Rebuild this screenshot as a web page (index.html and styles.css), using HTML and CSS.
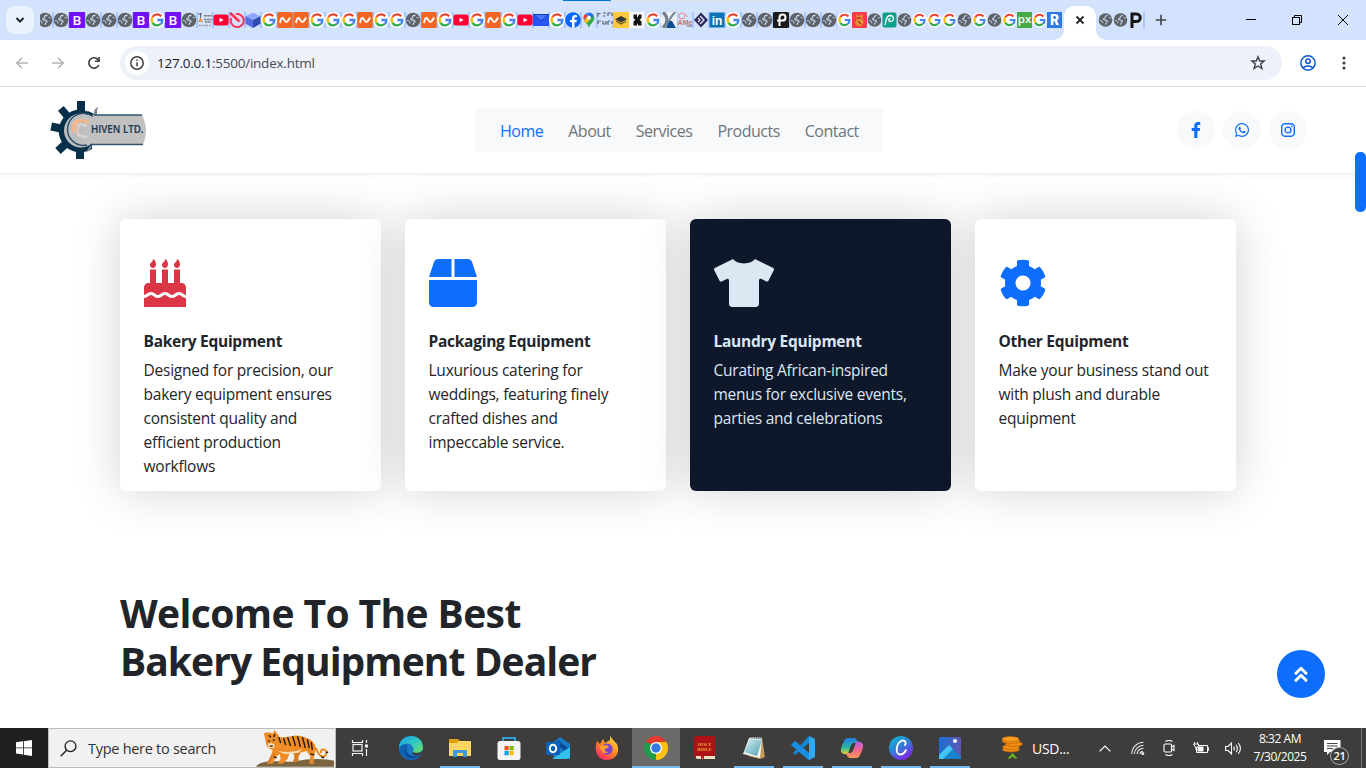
FILE: index.html
```html
<!DOCTYPE html>
<html lang="en">
<head>
<meta charset="utf-8">
<title>Chiven Ltd.</title>
<link rel="stylesheet" href="styles.css">
</head>
<body>
<svg class="defs" width="0" height="0">
  <defs>
    <linearGradient id="edgeA" x1="0" y1="0" x2="1" y2="1"><stop offset="0" stop-color="#1b9de2"/><stop offset=".5" stop-color="#2fc7c5"/><stop offset="1" stop-color="#6fe05a"/></linearGradient>
    <linearGradient id="fireA" x1=".9" y1="0" x2=".2" y2="1"><stop offset="0" stop-color="#ffe14a"/><stop offset=".5" stop-color="#ff8a20"/><stop offset="1" stop-color="#f5236b"/></linearGradient>
    <linearGradient id="copA" x1="0" y1="0" x2="0" y2="1"><stop offset="0" stop-color="#1f7be8"/><stop offset=".6" stop-color="#2bb9a0"/><stop offset="1" stop-color="#f3d12c"/></linearGradient>
    <linearGradient id="copB" x1="0" y1="0" x2="0" y2="1"><stop offset="0" stop-color="#b061e8"/><stop offset=".5" stop-color="#f0648c"/><stop offset="1" stop-color="#ff9a55"/></linearGradient>
    <linearGradient id="canA" x1="0" y1="0" x2=".6" y2="1"><stop offset="0" stop-color="#06c3cc"/><stop offset=".5" stop-color="#2d83dc"/><stop offset="1" stop-color="#7d2ae8"/></linearGradient>
    <linearGradient id="phoA" x1="0" y1="0" x2="1" y2="0"><stop offset="0" stop-color="#1a6fd0"/><stop offset="1" stop-color="#5c58b4"/></linearGradient>
    <linearGradient id="noteA" x1="0" y1="0" x2="1" y2="1"><stop offset="0" stop-color="#d8f1f6"/><stop offset="1" stop-color="#4c9db0"/></linearGradient>
  </defs>
  <symbol id="globe" viewBox="0 0 16 16"><circle cx="8" cy="8" r="7.300" fill="#5f6368"/><path d="M10.500 3.200Q7.500 3.500 7.700 5.200 7.900 6.200 6 6.500 5.500 8 8 8.200 10.500 8.500 9.800 10 8 11 8 13" fill="none" stroke="#cbdaf3" stroke-width="1.200"/><path d="M1.800 8.300 4.500 9.200 5.200 11.500M11.500 5.500 14 5.800" fill="none" stroke="#b9c8e0" stroke-width="1"/></symbol>
  <symbol id="google" viewBox="0 0 16 16"><circle cx="8" cy="8" r="8" fill="#fff"/><g fill="none" stroke-width="2.300"><path d="M12.200 4.300A5.400 5.400 0 0 0 3.500 5" stroke="#ea4335"/><path d="M3.500 5A5.400 5.400 0 0 0 3.500 11" stroke="#fbbc05"/><path d="M3.500 11A5.400 5.400 0 0 0 11.700 12" stroke="#34a853"/><path d="M11.700 12A5.300 5.300 0 0 0 13.400 8H8.300" stroke="#4285f4"/></g></symbol>
  <symbol id="boot" viewBox="0 0 16 16"><rect width="16" height="16" rx="1" fill="#7311f5"/><text x="8" y="12.800" text-anchor="middle" font-family="Roboto" font-size="13.500" font-weight="500" fill="#fff">B</text></symbol>
  <symbol id="name" viewBox="0 0 16 16"><rect x=".3" width="15.400" height="16" rx="1.500" fill="#f26522"/><path d="M3 11C4 5 5.500 5 7.300 8S10 11 13 5.500" fill="none" stroke="#fff" stroke-width="1.900"/></symbol>
  <symbol id="tube" viewBox="0 0 16 16"><rect x=".4" y="2.500" width="15.200" height="11" rx="2.500" fill="#ff0033"/><path d="M6.500 5.700 10.700 8 6.500 10.300Z" fill="#fff"/></symbol>
</svg>

<div class="topline"></div>

<header class="tabstrip">
  <div class="tabsearch"><svg width="12" height="12" viewBox="0 0 12 12"><path d="M2.500 4 6 7.600 9.500 4" fill="none" stroke="#1f2024" stroke-width="2"/></svg></div>
  <div class="tabs">
    <svg class="fav"><use href="#globe"/></svg><svg class="fav"><use href="#globe"/></svg><svg class="fav"><use href="#boot"/></svg><svg class="fav"><use href="#globe"/></svg><svg class="fav"><use href="#globe"/></svg><svg class="fav"><use href="#globe"/></svg><svg class="fav"><use href="#boot"/></svg><svg class="fav"><use href="#google"/></svg><svg class="fav"><use href="#boot"/></svg><svg class="fav"><use href="#globe"/></svg>
    <svg class="fav" viewBox="0 0 16 16"><path d="M1 2H5M3.500 1V7" stroke="#666" fill="none"/><path d="M3.500 5.500 6 10H1Z" fill="#e09a4a"/><path d="M7 3.800H15M7 7.500H15M8 10H14" stroke="#777" stroke-width="1.600" stroke-dasharray="2.500 .7"/><path d="M2 13.500H14" stroke="#999" stroke-width="1.500" stroke-dasharray="1.500 1"/></svg>
    <svg class="fav"><use href="#tube"/></svg>
    <svg class="fav" viewBox="0 0 16 16"><g fill="none" stroke="#f6365c"><path d="M6 2.500A6.500 6.500 0 1 1 2.300 6" stroke-width="2"/><path d="M1 1 10.500 9.500" stroke-width="3"/><path d="M2.500 4.800 8 10.500M5 1.500 11 7" stroke="#ffd5dd" stroke-width="1.200"/></g></svg>
    <svg class="fav" viewBox="0 0 16 16"><path d="M8 .5 15.500 4.300 8 8 .5 4.300Z" fill="#8fa8ff"/><path d="M.5 4.300 8 8V16L.5 11.800Z" fill="#536de0"/><path d="M15.500 4.300 8 8V16L15.500 11.800Z" fill="#3049b0"/></svg>
    <svg class="fav"><use href="#google"/></svg><svg class="fav"><use href="#name"/></svg><svg class="fav"><use href="#name"/></svg><svg class="fav"><use href="#google"/></svg><svg class="fav"><use href="#google"/></svg><svg class="fav"><use href="#google"/></svg><svg class="fav"><use href="#name"/></svg><svg class="fav"><use href="#google"/></svg><svg class="fav"><use href="#google"/></svg><svg class="fav"><use href="#globe"/></svg><svg class="fav"><use href="#name"/></svg><svg class="fav"><use href="#google"/></svg><svg class="fav"><use href="#tube"/></svg><svg class="fav"><use href="#google"/></svg><svg class="fav"><use href="#name"/></svg><svg class="fav"><use href="#google"/></svg><svg class="fav"><use href="#tube"/></svg>
    <svg class="fav" viewBox="0 0 16 16"><rect y="2" width="16" height="12" fill="#2a54f5"/><path d="M.5 2.500 8 9 15.500 2.500Z" fill="#4676f8" stroke="#173cc0"/></svg>
    <svg class="fav"><use href="#google"/></svg>
    <svg class="fav" viewBox="0 0 16 16"><circle cx="8" cy="8" r="7.800" fill="#0866ff"/><path d="M7 15.700V10.300H5V8H7V6.500C7 4 8.200 3 10.200 3L12 3.200V5.200H10.800C9.800 5.200 9.500 5.800 9.500 6.600V8H11.900L11.500 10.300H9.500V15.700Z" fill="#fff"/></svg>
    <svg class="fav" viewBox="0 0 16 16"><path d="M8 .5A5.300 5.300 0 0 0 2.700 6C2.700 10 7 10.500 8 15.800L8 6Z" fill="#4285f4"/><path d="M3.200 8.500C4.200 11 7.200 12 8 15.800 8.800 11.500 13.300 10 13.300 5.900A5 5 0 0 0 12.700 3.500Z" fill="#34a853"/><path d="M8 .5A5.300 5.300 0 0 1 12.700 3.500L8 8.500Z" fill="#1a73e8"/><path d="M3 8 7 3.500 4 2.200A5.200 5.200 0 0 0 3 8Z" fill="#ea4335"/><path d="M3 8.200 6 5 9 8 5 11.500Z" fill="#fbbc04"/><circle cx="8" cy="5.800" r="2" fill="#fff"/></svg>
    <svg class="fav" viewBox="0 0 16 16"><path d="M1 1.500H3.500M1 1V4.500M6 1H9M6 4H8.500M11 4V1H14M15 1V4M1 9H4M1 9V12M6 9V12H9M9 9V12M11 9V13M11 9H13M15 9V12" stroke="#59626f" fill="none" stroke-width="1.200"/></svg>
    <svg class="fav" viewBox="0 0 16 16"><rect width="16" height="16" fill="#ffc83d"/><path d="M8 4 14 7.300 8 10.500 2 7.300Z" fill="#34383e"/><path d="M3 9 8 12 13 9" fill="none" stroke="#6f5b27" stroke-width="1.400"/></svg>
    <svg class="fav" viewBox="0 0 16 16"><rect width="16" height="16" fill="#f8f8f8"/><path d="M4.500 2.500H8V6L10 2.500H12.500V6L10.500 7.800 12.500 9.500V13.500H9.500L8 11V13.500H4.500V9.500L6.500 7.800 4.500 6.500Z" fill="#111"/></svg>
    <svg class="fav"><use href="#google"/></svg>
    <svg class="fav" viewBox="0 0 16 16"><rect width="16" height="16" fill="#eef1f4"/><path d="M2 0Q6 4 6 8T2 16" fill="none" stroke="#6f7f8d" stroke-width="3.200"/><path d="M14.500 0Q9 5 8 10" stroke="#7c8994" stroke-width="2.200" fill="none"/><path d="M8 9 11 9 15 16H5Z" fill="#0e4d92"/></svg>
    <svg class="fav" viewBox="0 0 16 16"><circle cx="5" cy="4" r="3" fill="none" stroke="#e8898d"/><path d="M8 2 11 5" stroke="#e8898d"/><text x="8" y="12.500" text-anchor="middle" font-family="Liberation Sans" font-size="7" font-weight="700" fill="#b77967">AMe</text><path d="M10 14H15" stroke="#666"/></svg>
    <svg class="fav" viewBox="0 0 16 16"><path d="M8 .5 15 8 8 15.500 1 8Z" fill="#2b2458"/><path d="M7 4 11 8 7 12M5 6 7 8 5 10" fill="none" stroke="#e6e9ff" stroke-width="1.300"/></svg>
    <svg class="fav" viewBox="0 0 16 16"><rect x=".5" y=".5" width="15" height="15" rx="1" fill="#0a72b5"/><text x="8" y="12.800" text-anchor="middle" font-family="Liberation Sans" font-size="12" font-weight="700" fill="#fff">in</text></svg>
    <svg class="fav"><use href="#google"/></svg><svg class="fav"><use href="#globe"/></svg><svg class="fav"><use href="#globe"/></svg>
    <svg class="fav" viewBox="0 0 16 16"><rect width="16" height="16" rx="1.500" fill="#1b1b1b"/><path d="M6.500 14V5.500A3 3 0 1 1 9.500 8.600H4" fill="none" stroke="#fff" stroke-width="2"/></svg>
    <svg class="fav"><use href="#globe"/></svg><svg class="fav"><use href="#globe"/></svg><svg class="fav"><use href="#globe"/></svg>
    <svg class="fav slim"><use href="#google"/></svg>
    <svg class="fav slim" viewBox="0 0 15 16"><rect width="15" height="16" rx="1" fill="#fb3b46"/><path d="M4 2 5 4 10 3 11 2 10 7 12 10 9 14H5L3 10 5 8Z" fill="#df9a35"/><path d="M5 6H9M6 9 9 12" stroke="#b2272b" stroke-width="1.300"/></svg>
    <svg class="fav slim"><use href="#globe"/></svg>
    <svg class="fav slim" viewBox="0 0 15 16"><rect x=".5" y=".5" width="14" height="15" rx="2" fill="#0ba08a"/><path d="M3 13C4 10 3.500 4 8 3.500 12.500 3.500 12.500 9.500 8.500 9.500 6 9.300 6.500 6.500 8.500 6.500" fill="none" stroke="#fff" stroke-width="1.300"/></svg>
    <svg class="fav slim"><use href="#globe"/></svg><svg class="fav slim"><use href="#google"/></svg><svg class="fav slim"><use href="#google"/></svg><svg class="fav slim"><use href="#google"/></svg><svg class="fav slim"><use href="#globe"/></svg><svg class="fav slim"><use href="#google"/></svg><svg class="fav slim"><use href="#globe"/></svg><svg class="fav slim"><use href="#google"/></svg>
    <svg class="fav slim" viewBox="0 0 15 16"><rect width="15" height="16" fill="#48a947"/><text x="7.500" y="11" text-anchor="middle" font-family="Open Sans" font-size="11.500" font-weight="600" fill="#fff">px</text></svg>
    <svg class="fav slim"><use href="#google"/></svg>
    <svg class="fav slim" viewBox="0 0 15 16"><rect width="15" height="16" fill="#2c7be5"/><text x="7.500" y="13" text-anchor="middle" font-family="Roboto" font-size="14" font-weight="900" fill="#fff">R</text></svg>
  </div>
  <div class="active-tab"><svg width="10" height="10" viewBox="0 0 10 10"><path d="M1.500 1.500 8.500 8.500M8.500 1.500 1.500 8.500" stroke="#1f2024" stroke-width="1.800"/></svg></div>
  <div class="tabs after">
    <svg class="fav slim"><use href="#globe"/></svg><svg class="fav slim"><use href="#globe"/></svg>
    <svg class="fav slim" viewBox="0 0 15 16"><path d="M4 16V2H8.500A3.500 3.500 0 0 1 8.500 9.500H5" fill="none" stroke="#151515" stroke-width="3"/></svg>
  </div>
  <svg class="newtab" width="12" height="12" viewBox="0 0 12 12"><path d="M6 .8V11.200M.8 6H11.200" stroke="#3c4043" stroke-width="1.600"/></svg>
  <div class="winbtns">
    <svg width="10" height="10"><path d="M0 4.500H10" stroke="#000"/></svg>
    <svg width="10" height="10" fill="none" stroke="#000"><rect x=".5" y="2.500" width="7" height="7"/><path d="M2.500 2.500V.5H9.500V7.500H7.500"/></svg>
    <svg width="10" height="10"><path d="M0 0 10 10M10 0 0 10" stroke="#000"/></svg>
  </div>
</header>

<div class="toolbar">
  <svg class="tbtn" width="12" height="12" viewBox="0 0 12 12" fill="none" stroke="#b3b5b8" stroke-width="1.500"><path d="M12 6H1M6 .8 .9 6 6 11.200"/></svg>
  <svg class="tbtn" width="12" height="12" viewBox="0 0 12 12" fill="none" stroke="#b3b5b8" stroke-width="1.500"><path d="M0 6H11M6 .8 11.100 6 6 11.200"/></svg>
  <svg class="tbtn" width="14" height="14" viewBox="0 0 14 14"><path d="M11.800 9A5.200 5.200 0 1 1 11 3.600L12 5" fill="none" stroke="#3c4043" stroke-width="1.700"/><path d="M12.800 1V6H7.800V4.500H11.200V1Z" fill="#3c4043"/></svg>
  <div class="omnibox">
    <span class="info"><svg width="14" height="14" viewBox="0 0 14 14"><circle cx="7" cy="7" r="6.200" fill="none" stroke="#3c4043" stroke-width="1.500"/><path d="M7 6.200V10.300M7 3.500V5" stroke="#3c4043" stroke-width="1.500"/></svg></span>
    <span class="url"><b>127.0.0.1</b>:5500/index.html</span>
    <svg class="star" width="16" height="16" viewBox="0 0 16 16"><path d="M8 1.800 9.700 6H14.100L10.700 8.900 11.900 13.500 8 11 4.100 13.500 5.300 8.900 1.900 6H6.300Z" fill="none" stroke="#3c4043" stroke-width="1.400"/></svg>
  </div>
  <svg class="profile" width="16" height="16" viewBox="0 0 16 16" fill="none" stroke="#0b57d0" stroke-width="1.500"><circle cx="8" cy="8" r="7.200"/><circle cx="8" cy="6.300" r="2.200"/><path d="M3 12.800C5.500 10.500 10.500 10.500 13 12.800"/></svg>
  <svg class="kebab" width="4" height="14" viewBox="0 0 4 14" fill="#3c4043"><circle cx="2" cy="2" r="1.600"/><circle cx="2" cy="7" r="1.600"/><circle cx="2" cy="12" r="1.600"/></svg>
</div>

<main class="page">
  <nav class="navbar">
    <svg class="logo" width="98" height="62" viewBox="0 0 98 62">
      <g fill="#06304a"><path d="M31 9.500A21.500 21.500 0 1 0 42 49L42 13Z"/><rect x="27" y="1" width="8" height="10"/><rect x="26" y="49" width="8" height="10"/><rect x="1" y="23.500" width="11" height="8" transform="rotate(12 6 28)"/><rect x="10" y="8" width="10" height="7.500" transform="rotate(50 14 11)"/><rect x="7" y="43.500" width="11" height="8" transform="rotate(-43 12 48)"/><path d="M36 10 44 14 47.500 7 46 18Z"/></g>
      <path d="M45 9 47.500 7 46 18 43 15ZM40 46 42 46 39 51 36 52Z" fill="#7c8a9b"/>
      <circle cx="31" cy="30.500" r="17" fill="#bcbec0"/>
      <path d="M34 15H92Q99.500 30 93 44.500H34Z" fill="#c1c1c1"/><path d="M44 15H92M40 44.500H93" stroke="#31556e" stroke-width="1.500"/>
      <path d="M43 16.500A16 16 0 1 0 37 45" fill="none" stroke="#284c67" stroke-width="1.400"/>
      <path d="M37.500 24V22Q35 20.500 29 20.500 24 21 23.500 27V32" fill="none" stroke="#f8b58b" stroke-width="2.800"/><path d="M36.500 26Q28 22 27.500 28V33Q28 37 37 36.500" fill="none" stroke="#d8d4d1" stroke-width="2.500"/><path d="M27 22V34" stroke="#f3bb9b" stroke-width="1.500"/>
      <text x="41" y="33" font-family="Open Sans" font-size="11.500" font-weight="600" fill="#1c3c56" stroke="#1c3c56" stroke-width=".2" textLength="52.500" lengthAdjust="spacingAndGlyphs">HIVEN LTD.</text>
    </svg>
    <ul class="menu"><li class="on">Home</li><li>About</li><li>Services</li><li>Products</li><li>Contact</li></ul>
    <div class="social">
      <span><svg width="10" height="16" viewBox="0 0 320 512"><path d="M279.140 288l14.220-92.660h-88.910v-60.130c0-25.350 12.420-50.060 52.240-50.060h40.420V6.260S260.430 0 225.360 0c-73.220 0-121.080 44.380-121.080 124.720v70.620H22.890V288h81.390v224h100.170V288z"/></svg></span>
      <span><svg width="14" height="16" viewBox="0 0 448 512"><path d="M380.900 97.100C339 55.100 283.200 32 223.900 32c-122.400 0-222 99.600-222 222 0 39.100 10.200 77.300 29.600 111L0 480l117.700-30.900c32.400 17.700 68.900 27 106.100 27h.1c122.300 0 224.100-99.600 224.100-222 0-59.300-25.200-115-67.100-157zm-157 341.600c-33.200 0-65.700-8.900-94-25.700l-6.700-4-69.800 18.300L72 359.200l-4.400-7c-18.500-29.400-28.200-63.300-28.200-98.200 0-101.700 82.800-184.500 184.600-184.500 49.300 0 95.600 19.200 130.400 54.100 34.800 34.900 56.200 81.200 56.100 130.500 0 101.800-84.900 184.600-186.600 184.600zm101.200-138.200c-5.500-2.800-32.800-16.200-37.900-18-5.100-1.900-8.800-2.800-12.500 2.800-3.700 5.600-14.300 18-17.600 21.800-3.200 3.700-6.500 4.200-12 1.400-32.600-16.300-54-29.100-75.500-66-5.700-9.800 5.700-9.100 16.300-30.300 1.800-3.700.9-6.900-.5-9.700-1.400-2.800-12.500-30.100-17.100-41.200-4.500-10.800-9.100-9.300-12.500-9.500-3.200-.2-6.900-.2-10.600-.2-3.700 0-9.700 1.400-14.800 6.900-5.100 5.600-19.400 19-19.400 46.300 0 27.300 19.900 53.700 22.600 57.400 2.800 3.700 39.100 59.700 94.800 83.800 35.200 15.200 49 16.500 66.600 13.900 10.700-1.600 32.800-13.400 37.400-26.400 4.600-13 4.600-24.100 3.200-26.400-1.300-2.500-5-3.900-10.500-6.600z"/></svg></span>
      <span><svg width="14" height="14" viewBox="0 0 14 14"><g fill="none" stroke="#0d6efd" stroke-width="1.400"><rect x=".7" y=".7" width="12.600" height="12.600" rx="3.500"/><circle cx="7" cy="7" r="2.900"/></g><circle cx="10.700" cy="3.300" r=".85"/></svg></span>
    </div>
  </nav>

  <section class="cards">
    <article class="card">
      <svg class="red" width="42" height="48" viewBox="0 0 448 512"><path d="M448 384c-28.020 0-31.260-32-74.500-32-43.430 0-46.825 32-74.750 32-27.695 0-31.454-32-74.750-32-42.842 0-47.218 32-74.500 32-28.148 0-31.202-32-74.750-32-43.547 0-46.653 32-74.750 32v-80c0-26.500 21.500-48 48-48h16V112h64v144h64V112h64v144h64V112h64v144h16c26.500 0 48 21.500 48 48v80zm0 128H0v-96c43.356 0 46.767-32 74.750-32 27.951 0 31.253 32 74.750 32 42.843 0 47.217-32 74.500-32 28.148 0 31.201 32 74.750 32 43.357 0 46.767-32 74.750-32 27.488 0 31.252 32 74.500 32v96zM96 96c-17.750 0-32-14.250-32-32 0-31 32-23 32-64 12 0 32 29.500 32 56s-14.250 40-32 40zm128 0c-17.750 0-32-14.250-32-32 0-31 32-23 32-64 12 0 32 29.500 32 56s-14.250 40-32 40zm128 0c-17.750 0-32-14.250-32-32 0-31 32-23 32-64 12 0 32 29.500 32 56s-14.250 40-32 40z"/></svg>
      <h2>Bakery Equipment</h2>
      <p>Designed for precision, our<br>bakery equipment ensures<br>consistent quality and<br>efficient production<br>workflows</p>
    </article>
    <article class="card">
      <svg width="48" height="48" viewBox="0 0 512 512"><path d="M509.500 184.600L458.900 32.800C452.400 13.200 434.100 0 413.400 0H272v192h238.700c-.4-2.500-.4-5-1.200-7.400zM240 0H98.600c-20.700 0-39 13.200-45.500 32.800L2.500 184.600c-.8 2.400-.8 4.900-1.200 7.400H240V0zM0 224v240c0 26.500 21.500 48 48 48h416c26.500 0 48-21.500 48-48V224H0z"/></svg>
      <h2>Packaging Equipment</h2>
      <p>Luxurious catering for<br>weddings, featuring finely<br>crafted dishes and<br>impeccable service.</p>
    </article>
    <article class="card dark">
      <svg width="60" height="48" viewBox="0 0 640 512"><path d="M631.200 96.500L436.500 0C416.400 27.800 371.900 47.200 320 47.200S223.600 27.800 203.500 0L8.800 96.500c-7.900 4-11.100 13.600-7.200 21.500l57.200 114.500c4 7.900 13.600 11.100 21.500 7.200l56.600-27.700c10.600-5.200 23 2.500 23 14.400V480c0 17.700 14.300 32 32 32h256c17.700 0 32-14.300 32-32V226.300c0-11.800 12.400-19.600 23-14.400l56.600 27.700c7.900 4 17.500.8 21.500-7.200L638.300 118c4-7.900.8-17.600-7.100-21.500z"/></svg>
      <h2>Laundry Equipment</h2>
      <p>Curating African-inspired<br>menus for exclusive events,<br>parties and celebrations</p>
    </article>
    <article class="card">
      <svg width="48" height="48" viewBox="0 0 512 512"><path d="M487.400 315.700l-42.600-24.600c4.300-23.200 4.300-47 0-70.200l42.600-24.600c4.900-2.800 7.100-8.600 5.500-14-11.100-35.600-30-67.800-54.700-94.600-3.800-4.100-10-5.100-14.800-2.300L380.800 110c-17.900-15.400-38.500-27.300-60.800-35.100V25.800c0-5.600-3.900-10.500-9.400-11.700-36.700-8.200-74.300-7.800-109.200 0-5.500 1.200-9.400 6.100-9.400 11.700V75c-22.200 7.900-42.800 19.800-60.800 35.100L88.700 85.500c-4.900-2.800-11-1.900-14.800 2.300-24.700 26.700-43.600 58.900-54.700 94.600-1.700 5.400.6 11.200 5.500 14L67.300 221c-4.300 23.200-4.300 47 0 70.200l-42.600 24.600c-4.900 2.800-7.100 8.600-5.500 14 11.100 35.600 30 67.800 54.700 94.600 3.800 4.100 10 5.100 14.800 2.300l42.600-24.600c17.900 15.400 38.500 27.300 60.800 35.100v49.200c0 5.600 3.900 10.500 9.400 11.700 36.700 8.200 74.300 7.800 109.200 0 5.500-1.200 9.400-6.100 9.400-11.700v-49.200c22.200-7.900 42.800-19.800 60.800-35.100l42.600 24.600c4.900 2.800 11 1.900 14.800-2.300 24.700-26.700 43.600-58.900 54.700-94.600 1.500-5.500-.7-11.300-5.600-14.100zM256 336c-44.100 0-80-35.900-80-80s35.900-80 80-80 80 35.900 80 80-35.900 80-80 80z"/></svg>
      <h2>Other Equipment</h2>
      <p>Make your business stand out<br>with plush and durable<br>equipment</p>
    </article>
  </section>

  <h1><span>Welcome To The Best</span><span class="second">Bakery Equipment Dealer</span></h1>
  <div class="scrollthumb"></div>
  <div class="totop"><svg width="14" height="18" viewBox="0 0 14 18"><path d="M2 8.300 7 3.300 12 8.300M2 15.300 7 10.300 12 15.300" fill="none" stroke="#fff" stroke-width="3" stroke-linecap="round" stroke-linejoin="round"/></svg></div>
</main>

<footer class="taskbar">
  <div class="start"><svg width="16" height="16" viewBox="0 0 16 16" fill="#fff"><path d="M0 2.300 7 1.300V7.500H0ZM7.800 1.200 16 0V7.500H7.800ZM0 8.300H7V14.600L0 13.600ZM7.800 8.300H16V16L7.800 14.800Z"/></svg></div>
  <div class="search">
    <svg width="17" height="17" viewBox="0 0 17 17" fill="none" stroke="#1b1b1b" stroke-width="1.300"><circle cx="10.500" cy="6.200" r="5.400"/><path d="M6.600 10.200 .7 16.200"/></svg>
    <span>Type here to search</span>
    <svg class="tiger" width="79" height="38" viewBox="0 0 80 38">
      <path d="M0 38C4 31 20 32 38 33 56 29 70 30 79 32V38Z" fill="#7b6541"/>
      <path d="M61 19C64 31 73 29 71 22 68 19 65 21 66 24" fill="none" stroke="#e68a25" stroke-width="2"/>
      <path d="M8 4 11 3 17 4 19 1 22 5 24 8Q31 8 36 7 44 5 52 9 60 12 61 20L59 26 58 33 60 35H54L55 27 51 22Q43 25 34 24L32 30 27 35H22L25 30 24 25 20 28 17 35H11L15 27 17 21Q11 20 10 14Z" fill="#ef8c27"/>
      <path d="M38 24 39 29 37 33H43L43 28 45 24ZM20 23 16 29 14 34 11 35 15 27Z" fill="#d97a20"/>
      <path d="M12 15 16 14 19 16 18 19 13 19ZM22 22Q36 25 47 20L42 24 29 25Z" fill="#f8dfb7"/>
      <path d="M28 9 30 16M32 8 35 17M37 7 40 17M42 7 45 18M47 8 50 19M52 10 54 19M56 13 57 21M23 8 25 14M55 25 59 26M13 6 15 8M19 5 18 8M18 28 21 29M66 28 69 29M71 24 73 23" stroke="#1d1811" stroke-width="1.400"/>
      <path d="M12 12 14 12M17 11 19 11M14 17 17 17" stroke="#171515" stroke-width="1.300"/>
    </svg>
  </div>
  <div class="taskview"><svg width="18" height="16" viewBox="0 0 18 16" fill="none" stroke="#f4f4f4" stroke-width="1.200"><path d="M1.500 0V2.500H11.500V0M1.500 16V13.500H11.500V16M15.500 0V3M15.500 9V16"/><rect x="2" y="4.500" width="9" height="6.500"/><path d="M15.500 4.500V7.500" stroke-width="3"/></svg></div>
  <div class="apps">
    <div class="app"><svg viewBox="0 0 24 24"><circle cx="12" cy="12" r="12" fill="#1b78c8"/><path d="M0 11C1-3 23-4 24 11 24 17 17 18 14 16 16 11 11 6 6 8 3 9 1 10 0 11Z" fill="url(#edgeA)"/><path d="M1 16C-1 10 4 7 9 9 5 13 8 21 17 20L22 18C18 25 5 27 1 16Z" fill="#1363b4"/><path d="M9 9C5 13 8 21 17 20L22 18C18 22 9 25 6 18 5 14 6 11 9 9Z" fill="#0d4b98"/><path d="M14 16Q17 18 22 16L24 14.500 22 18.500Q16 20.500 13 18Z" fill="#3e3d3c"/></svg></div>
    <div class="app run"><svg viewBox="0 0 24 24"><path d="M1 3H10L12 5H22V8H1Z" fill="#e0a00e"/><path d="M1 7H9L11 5H23V20H1Z" fill="#ffd665"/><path d="M5 21V14H19V21H15V17H9V21Z" fill="#4098dc"/></svg></div>
    <div class="app"><svg viewBox="0 0 24 24"><path d="M6 6V2H18V6" fill="none" stroke="#2aa3d8" stroke-width="2"/><rect x=".500" y="5" width="23" height="19" rx="2.500" fill="#f4f4f4"/><g><rect x="7.500" y="10" width="4.200" height="4.200" fill="#f25022"/><rect x="12.500" y="10" width="4.200" height="4.200" fill="#7fba00"/><rect x="7.500" y="15" width="4.200" height="4.200" fill="#00a4ef"/><rect x="12.500" y="15" width="4.200" height="4.200" fill="#ffb900"/></g></svg></div>
    <div class="app"><svg viewBox="0 0 24 24"><path d="M5 8 14 1 24 8V23H8Z" fill="#157bc9"/><path d="M12 4 23 13V18L9 7Z" fill="#0d4b94"/><path d="M24 11V20Q24 23 21 23H6Z" fill="#35bfeb"/><rect x="0" y="6" width="14" height="13" rx="1" fill="#0a62ba"/><ellipse cx="7" cy="12.500" rx="3.200" ry="3.800" fill="none" stroke="#fff" stroke-width="2"/></svg></div>
    <div class="app"><svg viewBox="0 0 24 24"><path d="M2 5 5 8 8 3 10 7 15 4 15 0 19 5 22 8C26 18 19 24 12 24 4 24-2 17 2 5Z" fill="url(#fireA)"/><circle cx="12" cy="13" r="5.500" fill="#7a42ce"/><path d="M4 10 12 9 14 11 9 14 13 17 8 17Z" fill="#ff9e26"/></svg></div>
    <div class="app run current"><svg viewBox="0 0 24 24"><path d="M12 12 1.600 6A12 12 0 0 1 22.400 6Z" fill="#e33b2e"/><path d="M12 12 22.400 6A12 12 0 0 1 12 24Z" fill="#fbc116"/><path d="M12 12V24A12 12 0 0 1 1.600 6Z" fill="#229b4b"/><path d="M12 6H22.400L17.200 15 12 24 17 14Z" fill="#fbc116"/><path d="M1.600 6 7 15 12 17 9 9Z" fill="#229b4b"/><circle cx="12" cy="12" r="6" fill="#fff"/><circle cx="12" cy="12" r="4.700" fill="#347be5"/></svg></div>
    <div class="app"><svg viewBox="0 0 24 24"><path d="M4 0H20Q23 0 22 3V22H4Q1 23 1 19V3Q1 0 4 0Z" fill="#ae1018"/><path d="M3 20H22V23H5Q2 23 3 20Z" fill="#f0dfc0"/><path d="M8 20H11V24L9.500 22 8 24Z" fill="#c5161e"/><text x="11.500" y="10" text-anchor="middle" font-family="Liberation Serif" font-size="4.800" font-weight="700" fill="#e6a52a">HOLY</text><text x="11.500" y="14.500" text-anchor="middle" font-family="Liberation Serif" font-size="4.800" font-weight="700" fill="#e6a52a">BIBLE</text></svg></div>
    <div class="app run"><svg viewBox="0 0 24 24"><path d="M20 2 23 21 18 23 6 20Z" fill="#c59b5b"/><path d="M7 2 20 3 18 22 1 18Z" fill="#eef3f2"/><path d="M8 3 20 4 15 20 2 16Z" fill="url(#noteA)"/><path d="M8 2H20" stroke="#c6d0d4" stroke-width="1.500" stroke-dasharray="1.500 .8"/></svg></div>
    <div class="app run"><svg viewBox="0 0 24 24"><path d="M2 17 18 0 18 7 4 19ZM2 7 18 24V17L4 5Z" fill="#1585d2"/><path d="M2 7 0 9 15 22 18 24V17L4 5Z" fill="#1a8ee0"/><path d="M18 0 24 3V21L18 24Z" fill="#31a8f4"/></svg></div>
    <div class="app run"><svg viewBox="0 0 24 24"><path d="M8 2H15Q17 3 18 7L13 7Q11 8 10 12L8 18Q4 19 2 17-1 15 4 5 5 2 8 2Z" fill="url(#copA)"/><path d="M16 22H9Q7 21 6 17H11Q13 16 14 12L16 6Q20 5 22 7 25 9 20 19 19 22 16 22Z" fill="url(#copB)"/></svg></div>
    <div class="app run"><svg viewBox="0 0 24 24"><circle cx="12" cy="12" r="12" fill="url(#canA)"/><path d="M16 9C18 6 15 3.500 12 5 7 8 6 18 11 18.500 14 18.500 16 16 17 14" fill="none" stroke="#fff" stroke-width="1.800" stroke-linecap="round"/></svg></div>
    <div class="app run"><svg viewBox="0 0 24 24"><rect x="1" y="1" width="22" height="22" rx="1.500" fill="url(#phoA)"/><path d="M1 20 11 10 23 21V23H1Z" fill="#1584cd"/><path d="M1 19 11 9 15 13 5 23H1Z" fill="#43c6f5"/><circle cx="17" cy="5" r="2" fill="#fff"/></svg></div>
  </div>
  <div class="tray">
    <div class="usd"><svg width="22" height="24" viewBox="0 0 22 24"><g fill="#ef8d15" stroke="#b96000" stroke-width=".6"><ellipse cx="10" cy="13.500" rx="8.500" ry="2.500"/><ellipse cx="10" cy="11" rx="8.500" ry="2.500"/><ellipse cx="13" cy="8" rx="8.500" ry="2.500"/><ellipse cx="10" cy="5" rx="9" ry="2.500"/><ellipse cx="9.500" cy="3" rx="8.500" ry="2.400" fill="#ff9e22"/></g><path d="M6.500 22.500 11.500 17 16.500 22.500H13.500L11.500 20.500 9.500 22.500Z" fill="#67b51a"/></svg><span>USD...</span></div>
    <svg class="t-up" width="12" height="7" viewBox="0 0 12 7"><path d="M.6 6.400 6 1 11.400 6.400" fill="none" stroke="#fff" stroke-width="1.200"/></svg>
    <svg class="t-wifi" width="14" height="14" viewBox="0 0 14 14" fill="none" stroke="#e8e8e8" stroke-width="1.100"><path d="M.7 13C1 6 6 1.500 12.500 1.300M3.300 13C3.700 8 7.500 4.500 12.500 4.200M6 13C6.500 10 8.500 7.600 12.500 7.200M8.700 13C9 11.500 10.500 10.300 12 10.200"/><circle cx="11.800" cy="12.500" r="1" fill="#fff"/></svg>
    <svg class="t-cam" width="12" height="16" viewBox="0 0 12 16" fill="none" stroke="#fff" stroke-width="1.100"><rect x="1" y="4" width="7.500" height="8" rx="1"/><path d="M8.500 7 11 5.500V10.500L8.500 9M2.500 1.500Q6-.5 9.500 1.500M2.500 14.500Q6 16.500 9.500 14.500"/></svg>
    <svg class="t-bat" width="16" height="12" viewBox="0 0 16 12" fill="none" stroke="#fff" stroke-width="1"><path d="M5 3.500H14.500V10.500H3.500V6M14.500 5.500H15.600V8.500H14.500M1.500 0V2M4.500 0V2M.5 2H5.500V4L3 6ZM3 5V8"/><rect x="5" y="5" width="5" height="4" fill="#fff"/></svg>
    <svg class="t-vol" width="17" height="13" viewBox="0 0 17 13" fill="none" stroke="#fff" stroke-width="1.100"><path d="M.6 4.500H3L6.500 1V12L3 8.500H.6ZM8.600 4.600Q10 6.500 8.600 8.400M11 2.800Q13.600 6.500 11 10.200M13.300 1Q17.500 6.500 13.300 12"/></svg>
    <div class="clock"><span>8:32 AM</span><span>7/30/2025</span></div>
    <div class="notes"><svg width="17" height="16" viewBox="0 0 17 16"><path d="M0 0H16.500V12H6L3 15V12H0Z" fill="#fff"/><path d="M3 3.500H13.500M3 6H13.500M3 8.500H9" stroke="#454341"/></svg><b>21</b></div>
  </div>
</footer>
</body>
</html>
```
FILE: styles.css
```css
* { box-sizing: border-box; margin: 0; padding: 0; }
body { width: 1366px; height: 768px; overflow: hidden; background: #fff; color: #212529; font-family: "Open Sans", "Noto Sans", sans-serif; display: flex; flex-direction: column; position: relative; }
svg { display: block; flex: none; }
.defs { position: absolute; }
.topline { position: absolute; z-index: 1; top: 0; left: 563px; width: 241px; height: 1px; background: linear-gradient(90deg, #0078d7 48px, #e3e3e3 48px); }

.tabstrip { height: 40px; flex: none; background: #d3e3fd; display: flex; align-items: center; position: relative; }
.tabsearch { width: 28px; height: 28px; margin-left: 6px; border-radius: 9px; background: #e9f0fe; display: grid; place-items: center; }
.tabs { display: flex; margin-left: 3px; height: 16px; clip-path: inset(0 0 0 3px); }
.fav { width: 16px; height: 16px; background: linear-gradient(90deg, #a8c7fa 1px, transparent 1px, transparent 15px, #a8c7fa 15px); }
.fav.slim { width: 15px; background: none; }
.active-tab { width: 32px; height: 34px; align-self: flex-end; margin-left: 2px; border-radius: 10px 10px 0 0; background: #fff; display: grid; place-items: center; padding-bottom: 6px; position: relative; }
.active-tab::before, .active-tab::after { content: ""; position: absolute; bottom: 0; width: 10px; height: 10px; }
.active-tab::before { left: -10px; background: radial-gradient(circle at 0 0, transparent 9.5px, #fff 10px); }
.active-tab::after { right: -10px; background: radial-gradient(circle at 100% 0, transparent 9.5px, #fff 10px); }
.tabs.after { margin-left: 2px; border-right: 2px solid #a8c7fa; clip-path: none; }
.newtab { margin-left: 10px; }
.winbtns { margin-left: auto; margin-right: 18px; display: flex; gap: 36px; }

.toolbar { height: 47px; flex: none; border-bottom: 1px solid #dfdfdf; background: #fff; display: flex; align-items: center; padding-left: 16px; }
.tbtn { margin-right: 24px; }
.tbtn + .tbtn + .tbtn { margin: 0 19px 0 -1px; }
.omnibox { width: 1162px; height: 34px; border-radius: 17px; background: #edf1fa; display: flex; align-items: center; padding: 0 16px 0 5px; }
.info { width: 24px; height: 24px; border-radius: 50%; background: #fff; display: grid; place-items: center; }
.url { margin-left: 8px; font-size: 13.5px; color: #474b50; letter-spacing: -.23px; }
.url b { font-weight: 400; color: #1f2024; }
.star { margin-left: auto; }
.profile { margin-left: 18px; }
.kebab { margin-left: 26px; }

.page { height: 641px; flex: none; position: relative; overflow: hidden; }
.navbar { height: 86px; background: #fff; box-shadow: 0 2px 4px rgba(0,0,0,.075); display: grid; grid-template-columns: 425px 408px 1fr; align-items: center; padding: 0 50px; position: relative; z-index: 2; }
.logo { margin-top: 1px; }
.menu { list-style: none; height: 44px; background: #f8f9fa; display: flex; align-items: center; gap: 25px; padding: 1px 0 0 25px; font-size: 16px; color: #6c757d; letter-spacing: -.5px; }
.menu .on { color: #0d6efd; }
.social { justify-self: end; display: flex; gap: 8px; margin-right: 9px; fill: #0d6efd; }
.social span { width: 38px; height: 38px; border-radius: 50%; background: #f8f9fa; display: grid; place-items: center; }
.cards { display: grid; grid-template-columns: repeat(4, 261px); gap: 24px; padding: 46px 0 0 120px; }
.card { height: 272px; border-radius: 6px; background: #fff; padding: 40px 23.5px 0; box-shadow: 0 0 48px rgba(0,0,0,.175); fill: #0d6efd; }
.card .red { fill: #dc3545; }
.card h2 { font-size: 15.5px; line-height: 19px; font-weight: 700; margin: 25px 0 7px; letter-spacing: -.27px; white-space: nowrap; }
.card p { font-size: 15.5px; line-height: 24px; letter-spacing: -.23px; white-space: nowrap; }
.card.dark { background: #0f172a; color: #dce7f3; fill: #dce7f3; }
h1 { font-size: 39px; line-height: 48px; font-weight: 700; padding: 98px 0 0 120px; letter-spacing: -.6px; }
h1 span { display: block; }
h1 .second { letter-spacing: -.95px; }
.scrollthumb { position: absolute; right: 0; top: 65px; width: 11px; height: 60px; border-radius: 5px; background: #0d6efd; z-index: 3; }
.totop { position: absolute; left: 1277px; top: 563px; width: 48px; height: 48px; border-radius: 50%; background: #0d6efd; display: grid; place-items: center; }

.taskbar { height: 40px; flex: none; background: #3e3d3c; display: flex; color: #fff; }
.start { width: 48px; background: #202022; display: grid; place-items: center; }
.search { width: 288px; background: #f1f1f1; border: 1px solid #bdbdbd; color: #333; display: flex; align-items: center; padding-left: 11px; }
.search span { font-size: 14.5px; margin-left: 11px; letter-spacing: -.28px; white-space: nowrap; }
.tiger { margin-left: auto; }
.taskview { width: 51px; padding-right: 3px; display: grid; place-items: center; }
.apps { display: flex; gap: 1px; }
.app { width: 48px; height: 40px; display: grid; place-items: center; }
.app svg { width: 24px; height: 24px; }
.app.run { background: linear-gradient(#76b9ed, #76b9ed) center bottom / 40px 2px no-repeat; }
.app.current { background: linear-gradient(#76b9ed, #76b9ed) center bottom / 48px 2px no-repeat, #6b6a69; }
.tray { flex: 1; display: flex; align-items: center; border-right: 1px solid #777; margin-right: 4px; padding-left: 27px; }
.usd { display: flex; align-items: center; gap: 9px; width: 98px; font-size: 14px; letter-spacing: -.3px; }
.t-wifi { margin-left: 20px; }
.t-cam { margin-left: 18px; }
.t-bat { margin-left: 18px; }
.t-vol { margin-left: 16px; }
.clock { width: 62px; margin-left: 7px; display: flex; flex-direction: column; align-items: center; font-size: 12px; line-height: 18px; letter-spacing: -.45px; white-space: nowrap; }
.notes { margin-left: 13px; margin-top: -1px; position: relative; }
.notes b { position: absolute; left: 6px; top: 7px; width: 19px; height: 18px; border: 1px solid #aaa; border-radius: 50%; background: #3e3d3c; font-size: 11px; line-height: 16px; text-align: center; font-weight: 600; letter-spacing: -.3px; }
```
